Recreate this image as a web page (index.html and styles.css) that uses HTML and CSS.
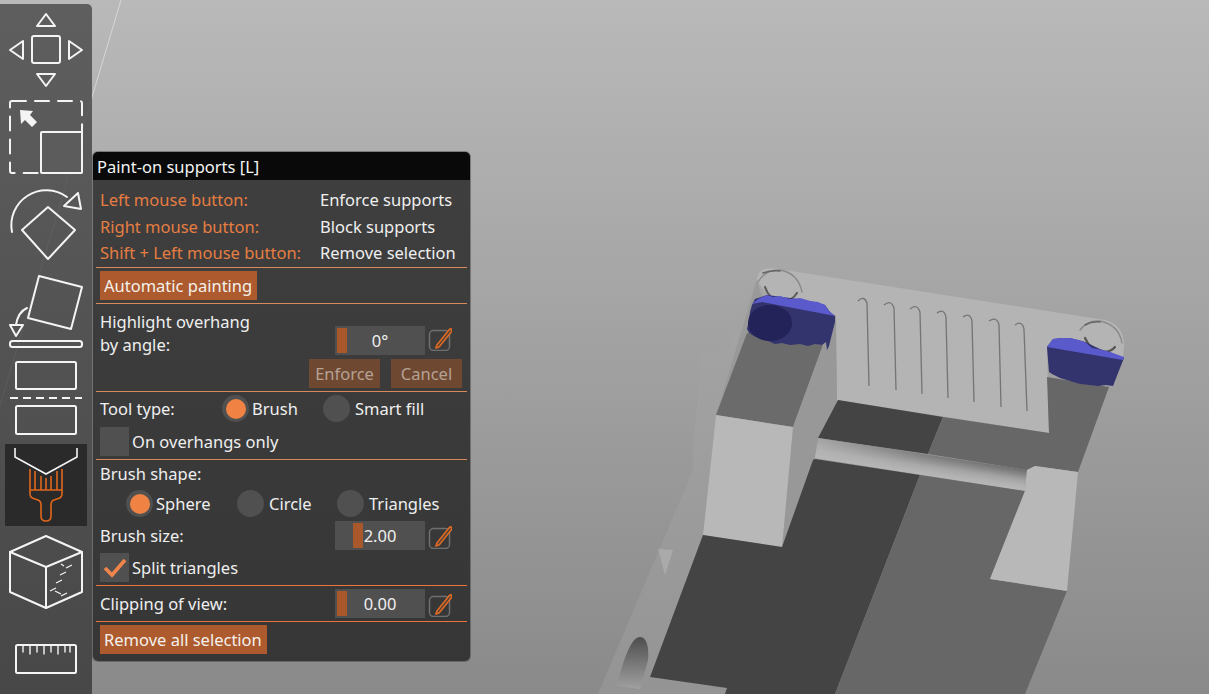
FILE: index.html
```html
<!DOCTYPE html>
<html lang="en">
<head>
<meta charset="utf-8">
<title>Paint-on supports</title>
<link rel="stylesheet" href="styles.css">
</head>
<body>
<main class="viewport">
  <svg class="scene" viewBox="0 0 1209 694" aria-hidden="true">
    <defs>
      <linearGradient id="barGrad" gradientUnits="userSpaceOnUse" x1="1000" y1="466" x2="997" y2="487">
        <stop offset="0" stop-color="#6d6d6d"/><stop offset=".25" stop-color="#868686"/>
        <stop offset=".5" stop-color="#a2a2a2"/><stop offset=".75" stop-color="#b0b0b0"/><stop offset="1" stop-color="#b8b8b8"/>
      </linearGradient>
      <linearGradient id="barFade" gradientUnits="userSpaceOnUse" x1="818" y1="0" x2="1027" y2="0">
        <stop offset="0" stop-color="#b8b8b8" stop-opacity=".75"/><stop offset=".5" stop-color="#b8b8b8" stop-opacity=".25"/><stop offset="1" stop-color="#b8b8b8" stop-opacity="0"/>
      </linearGradient>
      <linearGradient id="holeGrad" x1="0" y1="0" x2="0" y2="1">
        <stop offset="0" stop-color="#4e4e4e"/><stop offset=".5" stop-color="#777"/><stop offset="1" stop-color="#a0a0a0"/>
      </linearGradient>
      <linearGradient id="wingGrad" gradientUnits="userSpaceOnUse" x1="0" y1="340" x2="0" y2="694">
        <stop offset="0" stop-color="#a3a3a3"/><stop offset="1" stop-color="#949494"/>
      </linearGradient>
    </defs>
    <line x1="121" y1="0" x2="-2" y2="412" stroke="#dcdcdc" stroke-width="1" opacity=".85"/>
    <polygon points="702,353 727,350 757,280 760,350 716,415 703,535 727,688 725,694 598,694 693,470 693,450" fill="url(#wingGrad)"/>
    <polygon points="757,280 716,415 703,535 650,677 727,688 800,560 790,400" fill="#999"/>
    <polygon points="658,549 673,550 665,575" fill="#aaa"/>
    <path d="M640,637 C647,637 649,648 648,660 L640,689 L617,686 C622,665 630,637 640,637 Z" fill="url(#holeGrad)"/>
    <path d="M757,280 Q757,268 772,268 L1105,320 Q1124,325 1124,345 L1123,358 L1047,345 L1049,433 L837,400 L835,315 L770,300 Z" fill="#b4b4b4"/>
    <polygon points="747,333 823,345 793,427 716,415" fill="#6b6b6b"/>
    <polygon points="793,427 823,345 836,315 837,400 815,459 782,547" fill="#989898"/>
    <polygon points="716,415 793,427 790,460 782,547 703,535" fill="#b8b8b8"/>
    <polygon points="838,400 943,417 928,454 818,438" fill="#444"/>
    <polygon points="943,417 1049,433 1047,377 1109,387 1078,472 1035,466 1027,470 928,454" fill="#676767"/>
    <polygon points="818,438 1027,470 1025,491 815,458" fill="url(#barGrad)"/>
    <polygon points="818,438 1027,470 1025,491 815,458" fill="url(#barFade)"/>
    <polygon points="815,459 920,475 835,694 725,694 727,688 650,677 703,535 782,547 813,460" fill="#444"/>
    <polygon points="920,475 1025,491 990,579 1067,591 1025,694 835,694" fill="#676767"/>
    <polygon points="1035,466 1078,472 1067,591 990,579 1025,491 1027,470" fill="#b8b8b8"/>
    <g fill="none" stroke-linecap="round">
      <path d="M758,282 Q766,269 780,270 Q798,273 802,292" stroke="#8a8a8a" stroke-width="1.4"/>
      <path d="M763,273 Q772,270 780,271" stroke="#666" stroke-width="1.6"/>
      <path d="M765,287 Q769,300 782,302 Q792,301 797,293" stroke="#5f5f5f" stroke-width="2.2"/>
      <path d="M1080,330 Q1088,320 1100,321 Q1119,325 1122,343" stroke="#8a8a8a" stroke-width="1.4"/>
      <path d="M1085,325 Q1092,321 1100,322" stroke="#666" stroke-width="1.6"/>
      <path d="M1085,338 Q1090,350 1103,352 Q1111,352 1115,347" stroke="#555" stroke-width="2.2"/>
    </g>
    <g fill="none" stroke="#747474" stroke-width="1.3">
      <path d="M858,301 Q864,295 867,303 L869,386"/>
      <path d="M884,305 Q891,299 894,308 L896,390"/>
      <path d="M910,309 Q917,303 920,312 L922,394"/>
      <path d="M937,313 Q944,308 946,317 L948,398"/>
      <path d="M963,317 Q970,312 972,321 L974,402"/>
      <path d="M989,321 Q997,316 999,325 L1001,407"/>
      <path d="M1015,325 Q1022,320 1024,329 L1027,411"/>
    </g>
    <polygon points="755,299 767,295 790,298 810,301 825,305 830,312 835,316 835,322 833,330 831,338 829,346 827,350 826,342 822,345 815,344 808,346 800,344 790,345 782,343 775,344 768,341 762,339 754,336 749,333 747,329 749,320 750,312 752,305" fill="#33336e"/>
    <polygon points="752,304 757,300 760,298 767,295 773,297 780,296 790,299 800,298 810,301 818,302 825,305 829,311 835,316 762,302" fill="#5a5acd"/>
    <ellipse cx="770" cy="323" rx="22" ry="18" fill="#23235a"/>
    <polygon points="1047,347 1053,339 1062,338 1070,338 1078,340 1085,342 1100,349 1112,353 1124,358 1120,368 1113,386 1106,385 1098,386 1090,385 1080,384 1070,381 1060,378 1052,374 1049,372 1048,360" fill="#33336e"/>
    <polygon points="1047,347 1053,339 1062,338 1070,338 1078,340 1085,342 1092,348 1098,349 1110,352 1124,357 1123,360" fill="#5a5acd"/>
  </svg>

  <nav class="toolbar" aria-label="Gizmos">
    <svg class="tools" viewBox="0 4 92 690" aria-hidden="true">
      <g fill="none" stroke="#f4f4f4" stroke-width="2" stroke-linejoin="round" stroke-linecap="round">
        <path d="M37,26 L46,14 L55,26 Z"/>
        <rect x="32" y="36" width="28" height="27" rx="2"/>
        <path d="M23,41 L10,50 L23,59 Z"/>
        <path d="M69,41 L82,50 L69,59 Z"/>
        <path d="M37,74 L55,74 L46,86 Z"/>

        <rect x="10" y="101" width="72" height="72" rx="2" stroke-dasharray="14 9"/>
        <rect x="41" y="132" width="41" height="41" rx="1" fill="#5c5c5c"/>

        <path d="M12,232 A35,35 0 0 1 67,197"/>
        <path d="M78,193 L81,209 L64,206 Z"/>
        <path d="M48,207 L75,230 L48,259 L22,230 Z"/>

        <path d="M39,276 L82,287 L71,329 L28,318 Z"/>
        <path d="M27,308 Q18,312 16,325"/>
        <path d="M10,325 L23,325 L16,336 Z"/>
        <rect x="10" y="341" width="72" height="6" rx="2.5"/>

        <rect x="16" y="362" width="60" height="27" rx="1.5"/>
        <path d="M10,398 L82,398" stroke-dasharray="8 5" stroke-linecap="butt"/>
        <rect x="16" y="406" width="60" height="28" rx="1.5"/>
      </g>
      <path d="M20,110 L33,111 L30,115 L37,122 L32,127 L25,120 L21,124 Z" fill="#f4f4f4"/>

      <rect class="tool-active" x="5" y="444" width="82" height="82"/>
      <path d="M15,448 V457 L46,474 L77,457 V448" fill="none" stroke="#f4f4f4" stroke-width="1.6"/>
      <path d="M30,469 V494 Q30,498 35,499 L38,500 Q41,501 41,505 V516 Q41,521 46,521 Q51,521 51,516 V505 Q51,501 54,500 L57,499 Q62,498 62,494 V469 M30,490 H62 M35,471 V490 M41,476 V490 M46,478 V490 M51,476 V490 M57,471 V490" fill="none" stroke="#e0661c" stroke-width="1.6"/>

      <g fill="none" stroke="#f4f4f4" stroke-width="2" stroke-linejoin="round" stroke-linecap="round">
        <path d="M46,536 L82,552 V592 L46,608 L10,592 V552 Z"/>
        <path d="M10,552 L46,567 L82,552 M46,567 V608"/>
        <path d="M61,564 L64,566 M66,568 L72,565 M60,575 L66,572 M56,583 L62,580 M50,591 L56,588 M55,591 L61,594 M61,596 L67,593" stroke-width="1.2" stroke-linecap="butt"/>
        <rect x="16" y="645" width="60" height="28" rx="1.5"/>
        <path d="M23,646 V652 M30,646 V654 M37,646 V652 M44,646 V654 M51,646 V652 M58,646 V654 M65,646 V652 M70,646 V652" stroke-width="1.4"/>
      </g>
    </svg>
  </nav>

  <section class="panel">
    <h1 class="panel-title">Paint-on supports [L]</h1>
    <div class="panel-body">
      <div class="help">
        <span class="key">Left mouse button:</span><span>Enforce supports</span>
        <span class="key">Right mouse button:</span><span>Block supports</span>
        <span class="key">Shift + Left mouse button:</span><span>Remove selection</span>
      </div>
      <hr class="sep">
      <div class="group">
        <button class="btn btn-auto">Automatic painting</button>
      </div>
      <hr class="sep">
      <div class="group group-overhang">
        <div class="row-overhang">
          <div class="overhang-label">Highlight overhang<br>by angle:</div>
          <div class="slider slider-low"><i class="grab grab-min"></i><span>0°</span></div>
          <svg class="edit" viewBox="0 0 24 24" aria-hidden="true"><rect x="1.5" y="3.5" width="20" height="20" rx="4" fill="none" stroke="#6f6f6f" stroke-width="1.5"/><path d="M9,18 L21,3 Q23,1 24,3 L23.5,4.5 L11,20 L8,21 Z" fill="#3a3a3a" stroke="#dc6a24" stroke-width="1.8" stroke-linejoin="round"/></svg>
        </div>
        <div class="row-actions">
          <button class="btn btn-off btn-enforce">Enforce</button>
          <button class="btn btn-off btn-cancel">Cancel</button>
        </div>
      </div>
      <hr class="sep">
      <div class="group group-tool">
        <div class="row-radios">
          <span class="tool-label">Tool type:</span>
          <label class="radio radio-brush"><i class="dot on"></i>Brush</label>
          <label class="radio"><i class="dot"></i>Smart fill</label>
        </div>
        <label class="check check-first"><i class="box"></i>On overhangs only</label>
      </div>
      <hr class="sep">
      <div class="group group-brush">
        <div class="brush-label">Brush shape:</div>
        <div class="row-shapes">
          <label class="radio radio-sphere"><i class="dot on"></i>Sphere</label>
          <label class="radio radio-circle"><i class="dot"></i>Circle</label>
          <label class="radio"><i class="dot"></i>Triangles</label>
        </div>
        <div class="row-slider">
          <span class="slider-label">Brush size:</span>
          <div class="slider"><i class="grab grab-mid"></i><span>2.00</span></div>
          <svg class="edit" viewBox="0 0 24 24" aria-hidden="true"><rect x="1.5" y="3.5" width="20" height="20" rx="4" fill="none" stroke="#6f6f6f" stroke-width="1.5"/><path d="M9,18 L21,3 Q23,1 24,3 L23.5,4.5 L11,20 L8,21 Z" fill="#3a3a3a" stroke="#dc6a24" stroke-width="1.8" stroke-linejoin="round"/></svg>
        </div>
        <label class="check check-second"><i class="box"><svg viewBox="0 0 29 29" aria-hidden="true"><path d="M5,15 L12,22 L25,7" fill="none" stroke="#f0844a" stroke-width="3.6"/></svg></i>Split triangles</label>
      </div>
      <hr class="sep sep-strong">
      <div class="group">
        <div class="row-slider">
          <span class="slider-label">Clipping of view:</span>
          <div class="slider"><i class="grab grab-min"></i><span>0.00</span></div>
          <svg class="edit" viewBox="0 0 24 24" aria-hidden="true"><rect x="1.5" y="3.5" width="20" height="20" rx="4" fill="none" stroke="#6f6f6f" stroke-width="1.5"/><path d="M9,18 L21,3 Q23,1 24,3 L23.5,4.5 L11,20 L8,21 Z" fill="#3a3a3a" stroke="#dc6a24" stroke-width="1.8" stroke-linejoin="round"/></svg>
        </div>
      </div>
      <hr class="sep sep-strong">
      <div class="group">
        <button class="btn btn-remove">Remove all selection</button>
      </div>
    </div>
  </section>
</main>
</body>
</html>
```
FILE: styles.css
```css
* { box-sizing: border-box; }

html, body {
  margin: 0;
  height: 100%;
  overflow: hidden;
}

body {
  font-family: "Noto Sans", "Open Sans", sans-serif;
  font-size: 16.5px;
  color: #efefef;
}

.viewport {
  position: relative;
  width: 1209px;
  height: 694px;
  overflow: hidden;
  background: linear-gradient(#b9b9b9, #8a8a8a);
}

.scene {
  position: absolute;
  inset: 0;
  width: 1209px;
  height: 694px;
}

.toolbar {
  position: absolute;
  left: 0;
  top: 4px;
  width: 92px;
  height: 690px;
  border-radius: 0 5px 0 0;
  background: linear-gradient(rgba(72, 72, 72, .8), rgba(60, 60, 60, .85));
}

.tools {
  display: block;
  width: 92px;
  height: 690px;
}

.tool-active { fill: #2a2a2a; }

.panel {
  position: absolute;
  left: 93px;
  top: 152px;
  width: 377px;
  height: 509px;
  border-radius: 5px;
  overflow: hidden;
  background: linear-gradient(#3f3f3f, #363636);
  box-shadow: 0 0 0 1px rgba(60, 60, 60, .45);
}

.panel-title {
  margin: 0;
  height: 28px;
  padding-left: 4px;
  font-size: 16.5px;
  font-weight: 400;
  line-height: 30px;
  background: #090909;
  color: #f4f4f4;
}

.panel-body {
  padding: 6px 3px 0;
}

.help {
  display: grid;
  grid-template-columns: 220px auto;
  grid-template-rows: 26px 28px 24px;
  align-items: center;
  padding: 0 4px;
  height: 81px;
}

.key { color: #e67d42; }

.sep {
  margin: 0;
  border: 0;
  height: 1px;
  background: #d98a5a;
}

.sep-strong { background: #f0743a; }

.group {
  display: flex;
  flex-direction: column;
  align-items: flex-start;
  padding: 3px 4px;
}

.group-overhang {
  padding-top: 6px;
  padding-bottom: 3px;
  align-items: stretch;
}

.group-tool { padding-bottom: 3px; }

.group-brush {
  padding-top: 0;
  padding-bottom: 3px;
  align-items: stretch;
}

.btn {
  display: block;
  height: 29px;
  margin: 0;
  padding: 0 4px;
  border: 0;
  font: inherit;
  line-height: 30px;
  text-align: left;
  color: #f4f0ec;
  background: #ad5b2e;
}

.btn-auto { width: 157px; }
.btn-remove { width: 167px; }

.btn-off {
  width: 71px;
  padding: 0;
  text-align: center;
  color: #b5a294;
  background: #6f4832;
}

.row-overhang {
  display: flex;
  align-items: flex-start;
  height: 49px;
}

.overhang-label {
  width: 235px;
  line-height: 23px;
}

.row-overhang .slider { margin-top: 16px; }
.row-overhang .edit { margin-top: 17px; }

.row-actions {
  display: flex;
  justify-content: flex-end;
  gap: 11px;
  padding-right: 1px;
}

.slider {
  position: relative;
  flex: none;
  width: 90px;
  height: 29px;
  line-height: 30px;
  text-align: center;
  background: #505050;
}

.slider span { position: relative; }

.grab {
  position: absolute;
  top: 2px;
  bottom: 2px;
  width: 10px;
  background: #a9582b;
}

.grab-min { left: 2px; }
.grab-mid { left: 18px; }

.edit {
  flex: none;
  width: 24px;
  height: 24px;
  margin-left: 3px;
}

.row-slider .edit { margin-top: 2px; }

.row-radios {
  display: flex;
  align-items: center;
  height: 27px;
}

.tool-label { width: 122px; }

.radio {
  display: flex;
  align-items: center;
  gap: 3px;
}

.radio-brush { width: 101px; }

.dot {
  flex: none;
  display: flex;
  align-items: center;
  justify-content: center;
  width: 27px;
  height: 27px;
  border-radius: 50%;
  background: #505050;
}

.dot:not(.on) { margin-right: 2px; }

.dot.on::after {
  content: "";
  width: 20px;
  height: 20px;
  border-radius: 50%;
  background: #f08343;
}

.check {
  display: flex;
  align-items: center;
  gap: 3px;
}

.check-first { margin-top: 5px; }
.check-second { margin-top: 3px; }

.box {
  flex: none;
  width: 29px;
  height: 29px;
  background: #505050;
}

.box svg {
  display: block;
  width: 29px;
  height: 29px;
}

.brush-label {
  height: 30px;
  line-height: 28px;
}

.row-shapes {
  display: flex;
  align-items: center;
  height: 27px;
  padding-left: 26px;
}

.radio-sphere { width: 111px; }
.radio-circle { width: 100px; }

.row-slider {
  display: flex;
  align-items: center;
  height: 29px;
  width: 100%;
}

.group-brush .row-slider { margin-top: 4px; }

.slider-label { width: 235px; }
```
